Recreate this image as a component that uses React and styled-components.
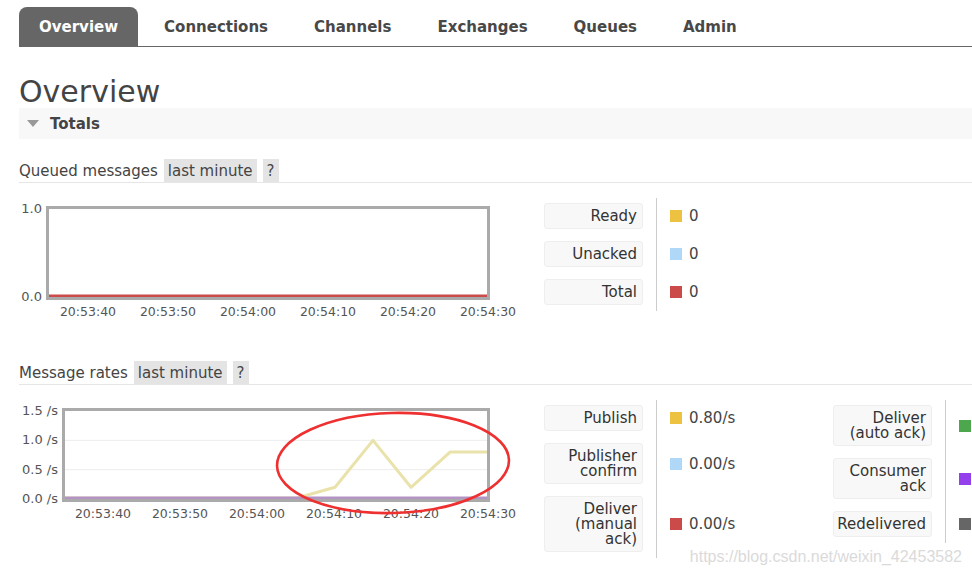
import styled, { createGlobalStyle } from "styled-components";

const GlobalStyle = createGlobalStyle`
  html, body {
    margin: 0;
    padding: 0;
    background: #fff;
    overflow: hidden;
  }
  body {
    font-family: "DejaVu Sans", Verdana, sans-serif;
    color: #444;
  }
`;

const COLORS = {
  yellow: "#edc240",
  blue: "#afd8f8",
  red: "#cb4b4b",
  green: "#4da74d",
  purple: "#9440ed",
  gray: "#666666",
};

const tabs = ["Overview", "Connections", "Channels", "Exchanges", "Queues", "Admin"];

const queued = {
  yAxisWidth: 27,
  plotWidth: 444,
  yTicks: [
    { label: "1.0", v: 1 },
    { label: "0.0", v: 0 },
  ],
  max: 1,
  grid: [],
  xStep: 80,
  xOffset: 2,
  series: [{ color: COLORS.red, width: 3, points: [[0, 0], [438, 0]] }],
  groups: [
    {
      valueWidth: 163,
      rows: [
        { label: "Ready", color: COLORS.yellow, value: "0" },
        { label: "Unacked", color: COLORS.blue, value: "0" },
        { label: "Total", color: COLORS.red, value: "0" },
      ],
    },
  ],
};

// second column of rates runs past the window edge, only swatches show
const rates = {
  yAxisWidth: 43,
  plotWidth: 428,
  yTicks: [
    { label: "1.5 /s", v: 1.5 },
    { label: "1.0 /s", v: 1 },
    { label: "0.5 /s", v: 0.5 },
    { label: "0.0 /s", v: 0 },
  ],
  max: 1.5,
  grid: [1, 0.5],
  xStep: 77,
  xOffset: 2.5,
  series: [
    {
      color: "#e9e2aa",
      width: 3,
      points: [[0, 0], [232, 0], [270, 0.2], [308, 1.0], [346, 0.2], [385, 0.8], [422, 0.8]],
    },
    { color: "#b394c4", width: 3, points: [[0, 0], [422, 0]] },
  ],
  groups: [
    {
      valueWidth: 163,
      rows: [
        { label: "Publish", color: COLORS.yellow, value: "0.80/s" },
        { label: "Publisher confirm", color: COLORS.blue, value: "0.00/s" },
        { label: "Deliver (manual ack)", color: COLORS.red, value: "0.00/s" },
      ],
    },
    {
      valueWidth: 120,
      rows: [
        { label: "Deliver (auto ack)", color: COLORS.green },
        { label: "Consumer ack", color: COLORS.purple },
        { label: "Redelivered", color: COLORS.gray },
      ],
    },
  ],
};

const xLabels = ["20:53:40", "20:53:50", "20:54:00", "20:54:10", "20:54:20", "20:54:30"];

const PLOT_HEIGHT = 94;
const BORDER = 3;
const INNER = PLOT_HEIGHT - BORDER * 2;

const Chart = ({ data }) => {
  const innerW = data.plotWidth - BORDER * 2;
  const toY = (v) => Math.min(INNER - 1, INNER - (v / data.max) * INNER);
  return (
    <ChartArea>
      <PlotRow>
        <YAxis $width={data.yAxisWidth}>
          {data.yTicks.map((t) => (
            <YLabel key={t.label} style={{ top: BORDER + (INNER - (t.v / data.max) * INNER) - 8 }}>
              {t.label}
            </YLabel>
          ))}
        </YAxis>
        <Plot $width={data.plotWidth}>
          <svg width={innerW} height={INNER} viewBox={`0 0 ${innerW} ${INNER}`}>
            {data.grid.map((g) => (
              <line key={g} x1="0" x2={innerW} y1={toY(g)} y2={toY(g)} stroke="#ececec" strokeWidth="1" />
            ))}
            {data.series.map((s, i) => (
              <polyline
                key={i}
                fill="none"
                stroke={s.color}
                strokeWidth={s.width}
                strokeLinejoin="round"
                points={s.points.map(([x, v]) => `${x},${toY(v)}`).join(" ")}
              />
            ))}
          </svg>
        </Plot>
      </PlotRow>
      <XAxis $offset={data.yAxisWidth + data.xOffset}>
        {xLabels.map((l) => (
          <XLabel key={l} $step={data.xStep}>
            {l}
          </XLabel>
        ))}
      </XAxis>
    </ChartArea>
  );
};

const Legend = ({ groups }) => (
  <LegendRow>
    {groups.map((g, gi) => (
      <LegendGroup key={gi} $valueWidth={g.valueWidth}>
        <Divider $rows={g.rows.length} />
        {g.rows.map((r, i) => [
          <LabelBox key={`l${i}`} $row={i + 1}>
            {r.label}
          </LabelBox>,
          <ValueCell key={`v${i}`} $row={i + 1}>
            <Swatch $color={r.color} />
            {r.value}
          </ValueCell>,
        ])}
      </LegendGroup>
    ))}
  </LegendRow>
);

const Section = ({ title, data, top }) => (
  <>
    <SectionHeader $top={top}>
      <SectionTitle>{title}</SectionTitle>
      <Badge>last minute</Badge>
      <Badge>?</Badge>
    </SectionHeader>
    <ChartRow>
      <Chart data={data} />
      <Legend groups={data.groups} />
    </ChartRow>
  </>
);

export default function App() {
  return (
    <Page>
      <GlobalStyle />
      <Nav>
        {tabs.map((t, i) => (
          <Tab key={t} $active={i === 0}>
            {t}
          </Tab>
        ))}
      </Nav>
      <Heading>Overview</Heading>
      <TotalsBar>
        <Arrow />
        <TotalsTitle>Totals</TotalsTitle>
      </TotalsBar>
      <Section title="Queued messages" data={queued} top={20} />
      <Section title="Message rates" data={rates} top={42} />
      <Annotation width="250" height="116" viewBox="0 0 250 116">
        <ellipse
          cx="123"
          cy="58"
          rx="116"
          ry="50"
          fill="none"
          stroke="#ee3030"
          strokeWidth="2.6"
          transform="rotate(-1.5 123 58)"
        />
      </Annotation>
      <Watermark>https://blog.csdn.net/weixin_42453582</Watermark>
    </Page>
  );
}

const Page = styled.div`
  position: relative;
  width: 972px;
  height: 577px;
  padding: 7px 0 0 19px;
  box-sizing: border-box;
  overflow: hidden;
`;

const Nav = styled.ul`
  display: flex;
  list-style: none;
  margin: 0;
  padding: 0;
  border-bottom: 1px solid #666;
`;

const Tab = styled.li`
  flex-shrink: 0;
  height: 39px;
  line-height: 40px;
  padding: 0 20px;
  margin-right: 6px;
  font-size: 15px;
  font-weight: bold;
  color: ${({ $active }) => ($active ? "#fff" : "#484848")};
  background: ${({ $active }) => ($active ? "#666" : "transparent")};
  border-radius: 8px 8px 0 0;
`;

const Heading = styled.h1`
  margin: 28px 0 0;
  font-size: 30px;
  line-height: 33px;
  font-weight: normal;
  color: #444;
`;

const TotalsBar = styled.div`
  display: flex;
  align-items: center;
  gap: 11px;
  height: 31px;
  padding-left: 8px;
  background: #f8f8f8;
`;

const Arrow = styled.span`
  width: 0;
  height: 0;
  border-style: solid;
  border-width: 7px 6.5px 0;
  border-color: #999 transparent transparent;
`;

const TotalsTitle = styled.span`
  font-size: 15px;
  font-weight: bold;
  color: #444;
`;

const SectionHeader = styled.div`
  display: flex;
  gap: 6px;
  margin-top: ${({ $top }) => $top}px;
  border-bottom: 1px solid #e6e6e6;
  font-size: 15px;
  line-height: 25px;
  height: 23px;
  align-items: flex-start;
`;

const SectionTitle = styled.span`
  color: #444;
`;

const Badge = styled.span`
  height: 23px;
  padding: 0 4px;
  background: #e4e4e4;
  color: #444;
`;

const ChartRow = styled.div`
  display: flex;
  align-items: flex-start;
  padding-top: 15px;
`;

const ChartArea = styled.div`
  flex-shrink: 0;
  width: 525px;
  padding-top: 8px;
`;

const PlotRow = styled.div`
  display: flex;
`;

const YAxis = styled.div`
  position: relative;
  flex-shrink: 0;
  width: ${({ $width }) => $width}px;
  height: ${PLOT_HEIGHT}px;
`;

const YLabel = styled.span`
  position: absolute;
  right: 4px;
  font-size: 13px;
  line-height: 16px;
  color: #555;
  white-space: nowrap;
`;

const Plot = styled.div`
  flex-shrink: 0;
  width: ${({ $width }) => $width}px;
  height: ${PLOT_HEIGHT}px;
  box-sizing: border-box;
  border: ${BORDER}px solid #aaa;
  overflow: hidden;

  svg {
    display: block;
  }
`;

const XAxis = styled.div`
  display: flex;
  margin: 5px 0 0 ${({ $offset }) => $offset}px;
`;

const XLabel = styled.span`
  flex-shrink: 0;
  width: ${({ $step }) => $step}px;
  text-align: center;
  font-size: 12.5px;
  line-height: 14px;
  color: #555;
`;

const LegendRow = styled.div`
  display: flex;
  align-items: flex-start;
  flex-shrink: 0;
`;

const LegendGroup = styled.div`
  display: grid;
  flex-shrink: 0;
  grid-template-columns: 99px 1px ${({ $valueWidth }) => $valueWidth}px;
  column-gap: 13px;
  row-gap: 12px;
  padding: 5px 0 6px;
`;

const Divider = styled.div`
  grid-column: 2;
  grid-row: 1 / span ${({ $rows }) => $rows};
  margin: -5px 0 -6px;
  background: #ccc;
`;

const LabelBox = styled.div`
  grid-column: 1;
  grid-row: ${({ $row }) => $row};
  box-sizing: border-box;
  padding: 5px 5px 4px 2px;
  background: #f8f8f8;
  border: 1px solid #eee;
  border-radius: 3px;
  text-align: right;
  font-size: 15px;
  line-height: 15px;
  color: #333;
`;

const ValueCell = styled.div`
  grid-column: 3;
  grid-row: ${({ $row }) => $row};
  display: flex;
  align-items: center;
  gap: 7px;
  font-size: 15px;
  color: #444;
  white-space: nowrap;
`;

const Swatch = styled.span`
  flex-shrink: 0;
  width: 12px;
  height: 12px;
  background: ${({ $color }) => $color};
`;

const Annotation = styled.svg`
  position: absolute;
  left: 270px;
  top: 405px;
  pointer-events: none;
`;

const Watermark = styled.div`
  position: absolute;
  right: 10px;
  top: 548px;
  font-family: "Liberation Sans", Arial, sans-serif;
  font-size: 16px;
  color: #dadada;
  white-space: nowrap;
`;
